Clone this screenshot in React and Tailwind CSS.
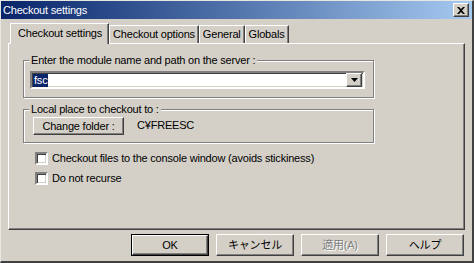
import React from "react";

const F = "font-['Liberation_Sans',Arial,sans-serif] tracking-[-0.2px]";
const J = "font-['Liberation_Sans','Noto_Sans_CJK_JP',sans-serif]";

const raised =
  "border border-t-white border-l-white border-r-[#404040] border-b-[#404040] shadow-[inset_-1px_-1px_0_#808080]";
const sunken =
  "border-2 border-t-[#808080] border-l-[#808080] border-r-white border-b-white";
const etched =
  "border border-[#808080] shadow-[inset_1px_1px_0_#fff,1px_1px_0_#fff]";

function Tab({ label, active, first }) {
  if (active) {
    return (
      <div
        className={`relative z-10 -mb-[1px] h-[21px] pl-[7px] pr-[6px] flex items-start pt-[3px] bg-[#d4d0c8] border-t border-l border-t-white border-l-white border-r border-r-[#404040] shadow-[inset_-1px_0_0_#808080] ${first ? "ml-[2px]" : ""}`}
      >
        <span className="text-[11px] leading-[13px] text-black">{label}</span>
      </div>
    );
  }
  return (
    <div className="h-[18px] px-[3px] flex items-start pt-[2px] border-t border-t-white border-l border-l-white border-r border-r-[#404040] shadow-[inset_-1px_0_0_#808080]">
      <span className="text-[11px] leading-[13px] text-black">{label}</span>
    </div>
  );
}

function Checkbox({ label }) {
  return (
    <div className="flex items-center h-[13px]">
      <div className={`w-[13px] h-[13px] bg-white ${sunken} shadow-[inset_1px_1px_0_#404040,inset_-1px_-1px_0_#d4d0c8]`} />
      <span className="ml-[4px] text-[11px] leading-[13px] text-black">{label}</span>
    </div>
  );
}

function Btn({ children, def, disabled }) {
  return (
    <div
      className={`w-[78px] h-[22px] flex items-center justify-center ${
        def ? "border border-black" : ""
      }`}
    >
      <div className={`w-full h-full flex items-center justify-center ${raised}`}>
        <span
          className={`${J} text-[11px] leading-[13px] ${
            disabled ? "text-[#808080] [text-shadow:1px_1px_0_#fff]" : "text-black"
          }`}
        >
          {children}
        </span>
      </div>
    </div>
  );
}

export default function App() {
  return (
    <div
      className={`${F} w-[474px] h-[263px] bg-[#d4d0c8] flex flex-col border-l border-t border-l-[#e8e6e1] border-t-[#e8e6e1] border-r-2 border-b-2 border-r-[#404040] border-b-[#404040] overflow-hidden`}
    >
      {/* Title bar */}
      <div className="h-[18px] flex items-center justify-between bg-gradient-to-r from-[#0a246a] to-[#a6caf0] pl-[2px] pr-[3px]">
        <span className="text-white text-[11px] leading-[13px]">Checkout settings</span>
        <div className={`w-[16px] h-[14px] bg-[#d4d0c8] flex items-center justify-center ${raised}`}>
          <svg width="8" height="7" viewBox="0 0 8 7">
            <path d="M0 0h2l2 2 2-2h2L5 3.5 8 7H6L4 5 2 7H0l3-3.5z" fill="#000" />
          </svg>
        </div>
      </div>

      {/* Body */}
      <div className="flex-1 flex flex-col pl-[7px] pt-[4px]">
        {/* Tabs */}
        <div className="flex items-end h-[20px]">
          <Tab label="Checkout settings" active first />
          <Tab label="Checkout options" />
          <Tab label="General" />
          <Tab label="Globals" />
        </div>

        {/* Panel */}
        <div
          className={`w-[457px] h-[187px] flex flex-col pl-[14px] pt-[16px] border border-t-white border-l-white border-r-[#404040] border-b-[#404040] shadow-[inset_-1px_-1px_0_#808080]`}
        >
          {/* Group 1 */}
          <div className={`relative w-[351px] h-[38px] ${etched} pl-[6px] pt-[10px]`}>
            <span className="absolute -top-[7px] left-[5px] px-[2px] bg-[#d4d0c8] text-[11px] leading-[13px] text-black whitespace-nowrap">
              Enter the module name and path on the server :
            </span>
            <div
              className={`w-[335px] h-[18px] bg-white ${sunken} shadow-[inset_1px_1px_0_#404040,inset_-1px_-1px_0_#d4d0c8] flex items-center justify-between pl-[1px] pr-[1px]`}
            >
              <span className="bg-[#0a246a] text-white text-[11px] leading-[13px] px-[1px]">fsc</span>
              <div className={`w-[16px] h-[14px] bg-[#d4d0c8] flex items-center justify-center ${raised}`}>
                <svg width="7" height="4" viewBox="0 0 7 4">
                  <path d="M0 0h7L3.5 4z" fill="#000" />
                </svg>
              </div>
            </div>
          </div>

          {/* Group 2 */}
          <div className={`relative mt-[11px] w-[351px] h-[34px] ${etched} pl-[9px] pt-[7px] flex items-start`}>
            <span className="absolute -top-[7px] left-[5px] px-[2px] bg-[#d4d0c8] text-[11px] leading-[13px] text-black whitespace-nowrap">
              Local place to checkout to :
            </span>
            <div className={`w-[91px] h-[18px] flex items-center justify-center ${raised}`}>
              <span className="text-[11px] leading-[13px] text-black">Change folder :</span>
            </div>
            <span className="ml-[13px] mt-[2px] text-[11px] leading-[13px] text-black">C¥FREESC</span>
          </div>

          {/* Checkboxes */}
          <div className="mt-[9px] ml-[12px] flex flex-col gap-[7px]">
            <Checkbox label="Checkout files to the console window (avoids stickiness)" />
            <Checkbox label="Do not recurse" />
          </div>
        </div>

        {/* Buttons */}
        <div className="mt-[4px] flex justify-end gap-[7px] pr-[8px]">
          <Btn def>OK</Btn>
          <Btn>キャンセル</Btn>
          <Btn disabled>適用(A)</Btn>
          <Btn>ヘルプ</Btn>
        </div>
      </div>
    </div>
  );
}
